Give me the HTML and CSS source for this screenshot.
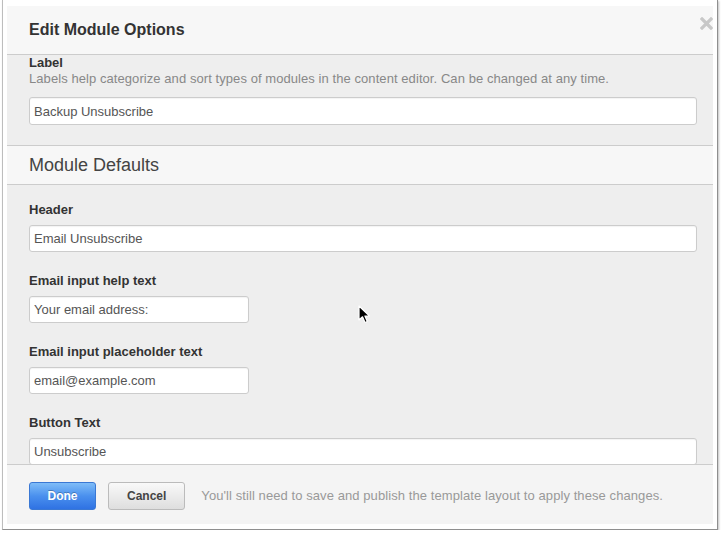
FILE: index.html
```html
<!DOCTYPE html>
<html lang="en">
<head>
    <meta charset="UTF-8">
    <meta name="viewport" content="width=device-width, initial-scale=1.0">
    <title>Edit Module Options</title>
    <link rel="stylesheet" href="styles.css">
</head>
<body>
    <div class="frame">
        <div class="modal">
            <!-- header -->
            <div class="modal-header">
                <h3>Edit Module Options</h3>
                <a class="close" href="#" title="Close">
                    <svg width="13" height="13" viewBox="0 0 13 13">
                        <path d="M2 2 L11 11 M11 2 L2 11" stroke="#c8c8c8" stroke-width="3.2" stroke-linecap="square"/>
                    </svg>
                </a>
            </div>

            <!-- scrolling body -->
            <div class="modal-body">
                <div class="group top">
                    <label>Label</label>
                    <p class="help">Labels help categorize and sort types of modules in the content editor. Can be changed at any time.</p>
                    <input type="text" class="wide" value="Backup Unsubscribe">
                </div>

                <div class="section-title">Module Defaults</div>

                <div class="fields">
                    <div class="group">
                        <label>Header</label>
                        <input type="text" class="wide" value="Email Unsubscribe">
                    </div>
                    <div class="group">
                        <label>Email input help text</label>
                        <input type="text" class="short" value="Your email address:">
                    </div>
                    <div class="group">
                        <label>Email input placeholder text</label>
                        <input type="text" class="short" value="email@example.com">
                    </div>
                    <div class="group">
                        <label>Button Text</label>
                        <input type="text" class="wide" value="Unsubscribe">
                    </div>
                </div>
            </div>

            <!-- footer -->
            <div class="modal-footer">
                <button class="btn primary">Done</button>
                <button class="btn">Cancel</button>
                <span class="note">You'll still need to save and publish the template layout to apply these changes.</span>
            </div>
        </div>
    </div>

    <!-- mouse pointer -->
    <svg class="pointer" width="14" height="20" viewBox="0 0 14 20">
        <path d="M1 1 L1 15 L4.5 11.8 L7 17.5 L9.3 16.5 L6.9 11 L11.5 11 Z" fill="#000" stroke="#fff" stroke-width="1.2" stroke-linejoin="round"/>
    </svg>
</body>
</html>
```

FILE: styles.css
```css
body {
    margin: 0;
    background-color: #ffffff;
    font-family: "Liberation Sans", Arial, Helvetica, sans-serif;
    color: #333;
}

.frame {
    margin-left: 2px;
    width: 716px;
    height: 530px;
    box-sizing: border-box;
    padding: 6px 4px 0 4px;
    border: 1px solid #bdbdbd;
    border-top: none;
    border-right-color: #8f8f8f;
    border-bottom-color: #8f8f8f;
    box-shadow: 1px 1px 2px rgba(0, 0, 0, 0.25);
    background-color: #ffffff;
}

.modal {
    position: relative;
    width: 706px;
    background-color: #eeeeee;
}

.modal-header {
    height: 48px;
    padding-left: 22px;
    background-color: #f7f7f7;
    border-bottom: 1px solid #cccccc;
}

.modal-header h3 {
    margin: 0;
    font-size: 16px;
    line-height: 47px;
    font-weight: bold;
    color: #333;
}

.close {
    position: absolute;
    top: 11px;
    right: 0;
    display: block;
    width: 13px;
    height: 13px;
}

.close svg {
    display: block;
}

.modal-body {
    height: 409px;
    overflow: hidden;
}

.group {
    padding: 0 16px 20px 22px;
}

label {
    display: block;
    font-size: 13px;
    line-height: 16px;
    font-weight: bold;
    color: #333;
}

.help {
    margin: 0 0 10px 0;
    font-size: 13px;
    line-height: 16px;
    letter-spacing: 0.07px;
    color: #888;
}

input {
    display: block;
    box-sizing: border-box;
    height: 28px;
    padding: 0 4px;
    font-family: "Liberation Sans", Arial, sans-serif;
    font-size: 13px;
    color: #555;
    background-color: #ffffff;
    border: 1px solid #cccccc;
    border-radius: 3px;
    box-shadow: inset 0 1px 1px rgba(0, 0, 0, 0.05);
}

.group:not(.top) input {
    margin-top: 7px;
    height: 27px;
}

input.wide {
    width: 100%;
}

input.short {
    width: 220px;
}

.section-title {
    height: 38px;
    padding-left: 22px;
    font-size: 18px;
    line-height: 38px;
    color: #444;
    background-color: #f7f7f7;
    border-top: 1px solid #cccccc;
    border-bottom: 1px solid #cccccc;
}

.fields {
    padding-top: 17px;
}

.fields .group {
    padding-bottom: 21px;
}

.modal-footer {
    display: flex;
    align-items: flex-start;
    height: 42px;
    padding: 17px 0 0 22px;
    background-color: #f4f4f4;
    border-top: 1px solid #cccccc;
}

.btn {
    height: 28px;
    padding: 0 18px;
    margin-right: 12px;
    font-family: "Liberation Sans", Arial, sans-serif;
    font-size: 12px;
    font-weight: bold;
    color: #444;
    background: linear-gradient(#f9f9f9, #dedede);
    border: 1px solid #bbbbbb;
    border-radius: 3px;
    cursor: pointer;
}

.btn.primary {
    width: 67px;
    padding: 0;
    color: #ffffff;
    text-shadow: 0 -1px 0 rgba(0, 0, 0, 0.25);
    background: linear-gradient(#7fbdf8, #4a90ee 50%, #2f72e3);
    border-color: #3a78d4;
}

.note {
    margin-left: 4px;
    font-size: 13px;
    line-height: 28px;
    letter-spacing: 0.08px;
    color: #999;
}

.pointer {
    position: absolute;
    left: 358px;
    top: 305px;
}
```
